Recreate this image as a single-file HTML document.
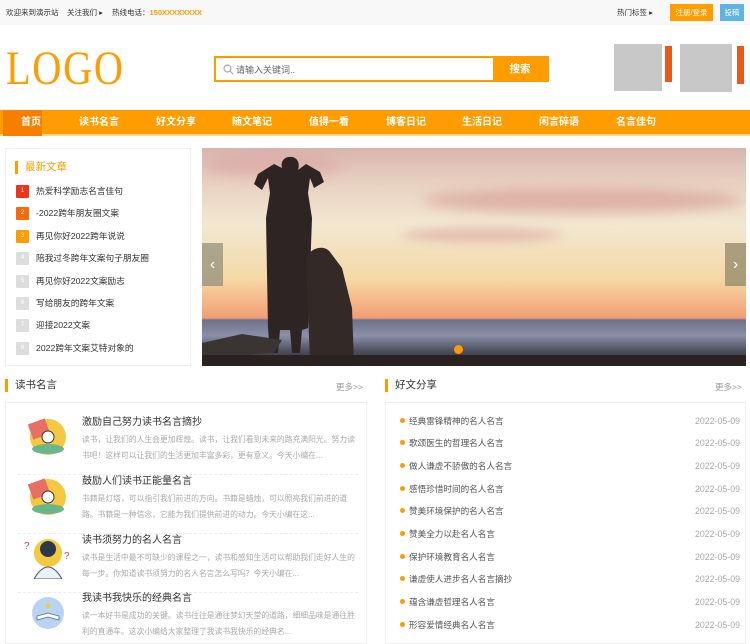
<!DOCTYPE html>
<html><head><meta charset="utf-8"><style>
*{margin:0;padding:0;box-sizing:border-box}
body{width:750px;height:644px;overflow:hidden;background:#fff;font-family:"Liberation Sans","Noto Sans CJK SC",sans-serif;font-size:12px;color:#333;position:relative}
.abs{position:absolute}
.top{left:0;top:0;width:750px;height:25px;background:#f8f8f8;font-size:7.5px;line-height:25px;white-space:nowrap}
.nav{left:0;top:110px;width:750px;height:26px;background:#ff9c00;border-bottom:2px solid #ffd58a}
.nav span{position:absolute;top:0;line-height:26px;color:#fff;font-size:10px;font-weight:bold;transform:translateX(-50%)}
.side{left:5px;top:148px;width:186px;height:218px;background:#fff;border:1px solid #f0f0f0}
.side .it{position:absolute;left:10px;font-size:8.7px;color:#333;line-height:13px;white-space:nowrap}
.side .n{display:inline-block;width:13px;height:13px;background:#ddd;color:#fff;font-size:6px;text-align:center;line-height:13px;margin-right:7px;border-radius:1px;vertical-align:top}
.ttl{font-size:10.5px;color:#333;border-left:3px solid #ff9c00;padding-left:7px;line-height:13px}
.more{font-size:8.5px;color:#999}
.box{border:1px solid #f0f0f0;background:#fff}
.art{position:absolute;left:80px}
.art h4{font-size:10px;font-weight:normal;color:#333;line-height:14px;white-space:nowrap}
.art p{font-size:7.8px;color:#aaa;line-height:16px;width:276px;margin-top:2px}
.li{position:absolute;left:14px;width:340px;font-size:8.6px;color:#555;line-height:12px;white-space:nowrap}
.li i{display:inline-block;width:5px;height:5px;border-radius:50%;background:#ff9c00;margin-right:4px;vertical-align:1px}
.li b{position:absolute;right:0;font-weight:normal;color:#aaa;font-size:8.8px}
.sep{position:absolute;left:12px;width:340px;border-top:1px dashed #eee}
</style></head><body>
<div class="abs top">
<span class="abs" style="left:6px">欢迎来到演示站</span>
<span class="abs" style="left:67px">关注我们 ▸</span>
<span class="abs" style="left:112px">热线电话：<span style="color:#ff9c00;font-weight:bold">150XXXXXXXX</span></span>
<span class="abs" style="left:617px">热门标签 ▸</span>
<span class="abs" style="left:670px;top:4px;width:43px;height:17px;background:#ff9c00;color:#fff;line-height:17px;text-align:center">注册/登录</span>
<span class="abs" style="left:720px;top:4px;width:24px;height:17px;background:#5fb4e6;color:#fff;line-height:17px;text-align:center">投稿</span>
</div>
<div class="abs" style="left:6px;top:43px;font-family:'Liberation Serif',serif;font-size:48px;color:#ff9c00;letter-spacing:2px;line-height:52px;transform:scaleX(.84);transform-origin:left">LOGO</div>
<div class="abs" style="left:214px;top:56px;width:335px;height:26px;border:2px solid #ff9c00;background:#fff">
<svg class="abs" style="left:7px;top:6px" width="11" height="11"><circle cx="4.5" cy="4.5" r="3.5" fill="none" stroke="#aaa" stroke-width="1.2"/><line x1="7" y1="7" x2="10" y2="10" stroke="#aaa" stroke-width="1.2"/></svg>
<span class="abs" style="left:20px;top:5px;font-size:9px;color:#666">请输入关键词..</span>
<div class="abs" style="right:0;top:0;width:54px;height:22px;background:#ff9c00;color:#fff;text-align:center;line-height:22px;font-weight:bold;font-size:10.5px">搜索</div>
</div>
<div class="abs" style="left:614px;top:44px;width:48px;height:47px;background:#c8c8c8"></div>
<div class="abs" style="left:665px;top:46px;width:7px;height:36px;background:#e85a1c"></div>
<div class="abs" style="left:680px;top:44px;width:52px;height:48px;background:#c8c8c8"></div>
<div class="abs" style="left:737px;top:46px;width:7px;height:38px;background:#e85a1c"></div>
<div class="abs nav">
<div class="abs" style="left:3px;top:0;width:39px;height:26px;background:#f77f00"></div>
<span style="left:31px">首页</span><span style="left:99px">读书名言</span><span style="left:176px">好文分享</span><span style="left:252px">随文笔记</span><span style="left:329px">值得一看</span><span style="left:406px">博客日记</span><span style="left:482px">生活日记</span><span style="left:559px">闲言碎语</span><span style="left:636px">名言佳句</span>
</div>
<div class="abs side">
<div class="abs ttl" style="left:9px;top:12px;color:#ff9c00">最新文章</div>
<div class="it" style="top:36px"><span class="n" style="background:#f0341a">1</span>热爱科学励志名言佳句</div>
<div class="it" style="top:58px"><span class="n" style="background:#f56a0c">2</span>-2022跨年朋友圈文案</div>
<div class="it" style="top:81px"><span class="n" style="background:#ff9c00">3</span>再见你好2022跨年说说</div>
<div class="it" style="top:103px"><span class="n">4</span>陪我过冬跨年文案句子朋友圈</div>
<div class="it" style="top:126px"><span class="n">5</span>再见你好2022文案励志</div>
<div class="it" style="top:148px"><span class="n">6</span>写给朋友的跨年文案</div>
<div class="it" style="top:170px"><span class="n">7</span>迎接2022文案</div>
<div class="it" style="top:193px"><span class="n">8</span>2022跨年文案艾特对象的</div>
</div>
<div class="abs" style="left:202px;top:148px;width:544px;height:218px;overflow:hidden;background:linear-gradient(180deg,#d9b4ae 0%,#e8cfc0 15%,#f2e8d2 35%,#f5d8a6 60%,#f3a276 77%,#ec9a7e 78%,#6e7189 79%,#8a90a8 86%,#4e5060 93%,#2a2220 100%)">
<div class="abs" style="left:0;top:5px;width:140px;height:25px;background:#d8a2a0;opacity:.5;border-radius:50%;filter:blur(6px)"></div>
<div class="abs" style="left:220px;top:40px;width:320px;height:25px;background:#d49892;opacity:.6;border-radius:50%;filter:blur(6px)"></div>
<div class="abs" style="left:200px;top:80px;width:160px;height:14px;background:#d49892;opacity:.5;border-radius:50%;filter:blur(5px)"></div>
<svg class="abs" style="left:0;top:0" width="544" height="218"><path fill="#2e2424" d="M80 20 C78 12 84 8 90 9 C96 10 98 16 96 22 L104 16 L118 24 L122 34 L112 40 L108 30 L106 45 L110 70 L106 180 L100 182 L98 205 L90 205 L88 182 L78 182 L76 205 L68 205 L66 180 L64 70 L68 45 L66 30 L60 42 L52 36 L56 26 L72 16Z"/><path fill="#332a28" d="M104 110 C108 100 122 96 128 104 L140 120 L150 160 L152 215 L108 215 Z"/><path fill="#3a3433" d="M0 195 L40 186 L80 192 L72 205 L0 210Z"/><rect y="207" width="544" height="11" fill="#2a2220"/></svg>
<div class="abs" style="left:0;top:95px;width:21px;height:43px;background:rgba(140,140,120,.7);color:#fff;font-size:16px;line-height:43px;text-align:center">‹</div>
<div class="abs" style="right:0;top:95px;width:21px;height:43px;background:rgba(140,130,100,.7);color:#fff;font-size:16px;line-height:43px;text-align:center">›</div>
<div class="abs" style="left:252px;top:197px;width:9px;height:9px;border-radius:50%;background:#ff9c00"></div>
</div>
<div class="abs ttl" style="left:5px;top:379px">读书名言</div>
<div class="abs more" style="left:336px;top:381px">更多&gt;&gt;</div>
<div class="abs box" style="left:5px;top:402px;width:362px;height:242px">
<svg class="abs" style="left:18px;top:12px" width="46" height="40"><circle cx="24" cy="22" r="18" fill="#f5c842"/><rect x="6" y="6" width="18" height="16" fill="#e87063" transform="rotate(-20 15 14)"/><ellipse cx="24" cy="34" rx="16" ry="5" fill="#6bb58a"/><circle cx="24" cy="22" r="6" fill="#fff" stroke="#333"/></svg>
<div class="art" style="left:76px;top:13px"><h4>激励自己努力读书名言摘抄</h4><p>读书，让我们的人生会更加辉煌。读书，让我们看到未来的路充满阳光。努力读书吧！这样可以让我们的生活更加丰富多彩，更有意义。今天小编在...</p></div>
<div class="sep" style="top:71px"></div>
<svg class="abs" style="left:18px;top:72px" width="46" height="40"><circle cx="24" cy="22" r="18" fill="#f5c842"/><rect x="6" y="6" width="18" height="16" fill="#e87063" transform="rotate(-20 15 14)"/><ellipse cx="24" cy="34" rx="16" ry="5" fill="#6bb58a"/><circle cx="24" cy="22" r="6" fill="#fff" stroke="#333"/></svg>
<div class="art" style="left:76px;top:72px"><h4>鼓励人们读书正能量名言</h4><p>书籍是灯塔，可以指引我们前进的方向。书籍是蜡烛，可以照亮我们前进的道路。书籍是一种信念，它能为我们提供前进的动力。今天小编在这...</p></div>
<div class="sep" style="top:130px"></div>
<svg class="abs" style="left:16px;top:132px" width="50" height="44"><circle cx="26" cy="18" r="14" fill="#f5c842"/><circle cx="26" cy="14" r="8" fill="#2b3a4a"/><path d="M12 44 Q26 20 40 44Z" fill="#e8f0f8" stroke="#456"/><text x="2" y="14" fill="#e04040" font-size="10">?</text><text x="42" y="24" fill="#e04040" font-size="10">?</text></svg>
<div class="art" style="left:76px;top:131px"><h4>读书须努力的名人名言</h4><p>读书是生活中最不可缺少的课程之一，读书和感知生活可以帮助我们走好人生的每一步。你知道读书须努力的名人名言怎么写吗？今天小编在...</p></div>
<div class="sep" style="top:189px"></div>
<svg class="abs" style="left:22px;top:193px" width="40" height="34"><circle cx="20" cy="17" r="16" fill="#b9d4f2"/><path d="M9 24 L20 21 L31 24 L31 20 L20 17 L9 20Z" fill="#fff" stroke="#4a6a9a" stroke-width=".8"/><circle cx="20" cy="10" r="2.5" fill="#f5c842"/></svg>
<div class="art" style="left:76px;top:189px"><h4>我读书我快乐的经典名言</h4><p>读一本好书是成功的关键。读书往往是通往梦幻天堂的道路，细细品味是通往胜利的直通车。这次小编给大家整理了我读书我快乐的经典名...</p></div>
</div>
<div class="abs ttl" style="left:385px;top:379px">好文分享</div>
<div class="abs more" style="left:715px;top:381px">更多&gt;&gt;</div>
<div class="abs box" style="left:385px;top:402px;width:361px;height:242px">
<div class="li" style="top:12px"><i></i>经典雷锋精神的名人名言<b>2022-05-09</b></div>
<div class="li" style="top:34px"><i></i>歌颂医生的哲理名人名言<b>2022-05-09</b></div>
<div class="li" style="top:57px"><i></i>做人谦虚不骄傲的名人名言<b>2022-05-09</b></div>
<div class="li" style="top:80px"><i></i>感悟珍惜时间的名人名言<b>2022-05-09</b></div>
<div class="li" style="top:102px"><i></i>赞美环境保护的名人名言<b>2022-05-09</b></div>
<div class="li" style="top:125px"><i></i>赞美全力以赴名人名言<b>2022-05-09</b></div>
<div class="li" style="top:148px"><i></i>保护环境教育名人名言<b>2022-05-09</b></div>
<div class="li" style="top:170px"><i></i>谦虚使人进步名人名言摘抄<b>2022-05-09</b></div>
<div class="li" style="top:193px"><i></i>蕴含谦虚哲理名人名言<b>2022-05-09</b></div>
<div class="li" style="top:216px"><i></i>形容爱情经典名人名言<b>2022-05-09</b></div>
</div>
</body></html>
